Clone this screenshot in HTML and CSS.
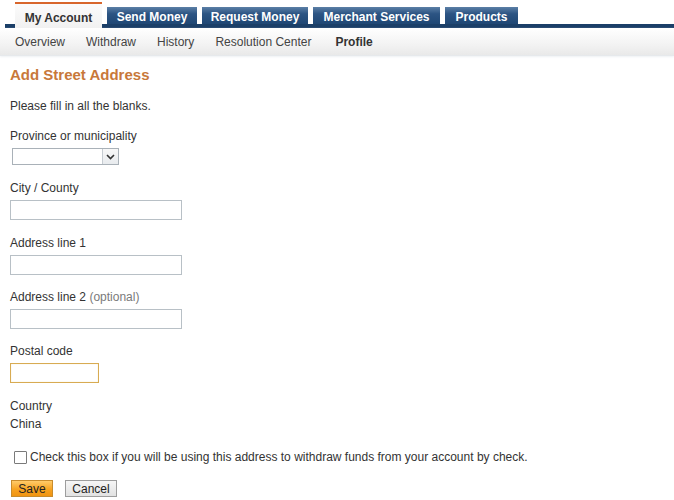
FILE: index.html
```html
<!DOCTYPE html>
<html>
<head>
<meta charset="utf-8">
<link rel="stylesheet" href="styles.css">
</head>
<body>
<div class="tabs">
  <a class="tab active">My Account</a>
  <a class="tab t-send">Send Money</a>
  <a class="tab t-request">Request Money</a>
  <a class="tab t-merchant">Merchant Services</a>
  <a class="tab t-products">Products</a>
</div>
<div class="subnav">
  <a>Overview</a>
  <a>Withdraw</a>
  <a>History</a>
  <a>Resolution Center</a>
  <a class="current">Profile</a>
</div>
<main class="content">
  <h1 class="title">Add Street Address</h1>
  <p class="intro">Please fill in all the blanks.</p>
  <div class="field">
    <label>Province or municipality</label>
    <div class="select"><span class="arrow"><svg width="9" height="6" viewBox="0 0 9 6"><path d="M1 1 L4.5 4.5 L8 1" fill="none" stroke="#333" stroke-width="1.6"/></svg></span></div>
  </div>
  <div class="field wide-gap">
    <label>City / County</label>
    <input class="text" type="text">
  </div>
  <div class="field wide-gap">
    <label>Address line 1</label>
    <input class="text" type="text">
  </div>
  <div class="field">
    <label>Address line 2 <span class="opt">(optional)</span></label>
    <input class="text" type="text">
  </div>
  <div class="field">
    <label>Postal code</label>
    <input class="text short" type="text">
  </div>
  <div class="country">
    <div>Country</div>
    <div>China</div>
  </div>
  <label class="check"><span class="box"></span>Check this box if you will be using this address to withdraw funds from your account by check.</label>
  <div class="buttons">
    <button class="btn save">Save</button>
    <button class="btn cancel">Cancel</button>
  </div>
</main>
</body>
</html>
```

FILE: styles.css
```css
* { box-sizing: border-box; }
html, body { margin: 0; padding: 0; background: #fff; }
body {
  font-family: Arial, "Liberation Sans", sans-serif;
  font-size: 12px;
  color: #333;
}
.tabs {
  display: flex;
  align-items: flex-end;
  gap: 5px;
  height: 28px;
  margin-left: 5px;
  padding-left: 10px;
  border-bottom: 4px solid #1b3f68;
}
.tab {
  display: block;
  height: 17px;
  padding: 0;
  text-align: center;
  line-height: 20px;
  font-weight: bold;
  font-size: 12px;
  color: #fff;
  background: linear-gradient(#5b7fa6, #2c5483 40%, #1f4774);
  white-space: nowrap;
}
.tab.active {
  width: 87px;
  height: 26px;
  margin-bottom: -4px;
  line-height: 28px;
  color: #333;
  background: linear-gradient(#fbfbfb, #f1f1f1);
  border-top: 2px solid #d8662c;
}
.t-send { width: 90px; }
.t-request { width: 106px; }
.t-merchant { width: 127px; }
.t-products { width: 73px; }
.subnav {
  display: flex;
  height: 28px;
  padding-left: 15px;
  align-items: center;
  background: linear-gradient(#ffffff, #f3f3f3 60%, #e9e9e9);
  border-bottom: 1px solid #e6e9ec;
  box-shadow: 0 1px 2px #eef1f4;
}
.subnav a {
  color: #444;
  margin-right: 21px;
  white-space: nowrap;
}
.subnav a:nth-child(4) { margin-right: 24px; }
.subnav a.current { font-weight: bold; color: #333; }
.content { padding: 0 10px; }
.title {
  margin: 10px 0 0;
  font-size: 15px;
  line-height: 17px;
  color: #c8783a;
  font-weight: bold;
}
.intro { margin: 16px 0 0; line-height: 15px; }
.field { margin-top: 15px; }
.field.wide-gap { margin-top: 16px; }
.field label { display: block; line-height: 15px; }
.opt { color: #7a7a7a; }
.select {
  margin: 4px 0 0 2px;
  width: 107px;
  height: 17px;
  border: 1px solid #a9b1b8;
  display: flex;
  justify-content: flex-end;
  background: #fff;
}
.arrow {
  width: 16px;
  height: 15px;
  border-left: 1px solid #c6ccd2;
  background: linear-gradient(#f8f8f8, #e8ebee);
  display: flex;
  align-items: center;
  justify-content: center;
}
.text {
  display: block;
  margin: 4px 0 0;
  width: 172px;
  height: 20px;
  border: 1px solid #b8c0c6;
  background: #fff;
  padding: 0;
  font: inherit;
}
.text.short {
  width: 89px;
  border-color: #d8ab52;
  box-shadow: inset 0 0 1px #e8cf95;
}
.country { margin-top: 14px; line-height: 18px; }
.check {
  display: flex;
  align-items: center;
  margin: 17px 0 0 4px;
  line-height: 15px;
}
.box {
  width: 13px;
  height: 13px;
  border: 1px solid #7a7a7a;
  border-radius: 1px;
  background: #fff;
  margin-right: 3px;
}
.buttons {
  display: flex;
  gap: 12px;
  margin: 15px 0 0 1px;
}
.btn {
  height: 17px;
  padding: 0 4px;
  font: 12px Arial, "Liberation Sans", sans-serif;
  line-height: 14px;
  color: #222;
}
.save {
  width: 42px;
  background: linear-gradient(#ffcb6a, #f7a321 55%, #f09412);
  border: 1px solid #c98c2c;
}
.cancel {
  width: 52px;
  background: linear-gradient(#f6f6f6, #e2e2e2);
  border: 1px solid #9d9d9d;
}
```
